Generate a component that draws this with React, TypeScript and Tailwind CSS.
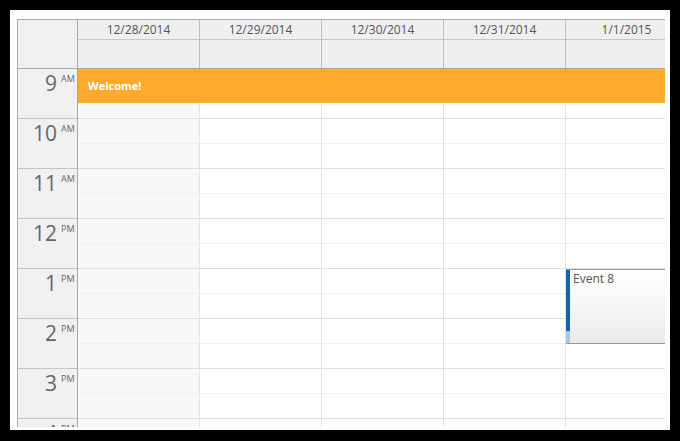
import React from "react";

const days = ["12/28/2014", "12/29/2014", "12/30/2014", "12/31/2014", "1/1/2015"];
const hours = [
  { h: "9", p: "AM" },
  { h: "10", p: "AM" },
  { h: "11", p: "AM" },
  { h: "12", p: "PM" },
  { h: "1", p: "PM" },
  { h: "2", p: "PM" },
  { h: "3", p: "PM" },
  { h: "4", p: "PM" },
];

function DayColumn({ weekend }: { weekend: boolean }) {
  return (
    <div
      className={`w-[122px] shrink-0 border-r border-[#e2e2e2] ${weekend ? "bg-[#f8f8f8]" : "bg-white"}`}
    >
      {hours.map((x) => (
        <div key={x.h}>
          <div className="h-[25px] border-b border-[#efefef]" />
          <div className="h-[25px] border-b border-[#dedede]" />
        </div>
      ))}
    </div>
  );
}

export default function App() {
  return (
    <div className="w-[680px] h-[441px] bg-black pt-[10px] pl-[10px] font-['Open_Sans',sans-serif]">
      <div className="w-[660px] h-[420px] bg-white pt-[9px] pl-[7px]">
        <div className="w-[648px] h-[408px] overflow-hidden">
          {/* header */}
          <div className="flex h-[49px] border-t border-[#a9a9a9]">
            <div className="w-[61px] shrink-0 bg-[#f0f0f0] border-l border-r border-[#a9a9a9]" />
            {days.map((d) => (
              <div
                key={d}
                className="w-[122px] shrink-0 flex flex-col bg-[#efefef] border-r border-[#bdbdbd]"
              >
                <div className="h-[20px] border-b border-[#c8c8c8] flex items-center justify-center text-[12px] text-[#555]">
                  {d}
                </div>
                <div className="flex-1" />
              </div>
            ))}
          </div>

          {/* body */}
          <div className="relative flex border-t border-[#a9a9a9]">
            <div className="w-[61px] shrink-0 bg-[#f0f0f0] border-l border-r border-[#a9a9a9]">
              {hours.map((x) => (
                <div
                  key={x.h}
                  className="h-[50px] border-b border-[#c4c4c4] flex justify-end pr-[2px] text-[#666]"
                >
                  <span className="text-[21px] leading-[26px] mt-[1px]">{x.h}</span>
                  <span className="text-[9px] leading-[10px] mt-[5px] ml-[4px] w-[14px]">{x.p}</span>
                </div>
              ))}
            </div>
            {days.map((d, i) => (
              <DayColumn key={d} weekend={i === 0} />
            ))}

            {/* events */}
            <div className="absolute left-[61px] top-0 w-[600px] h-[34px] bg-[#ffaa2d] flex items-center pl-[10px] text-[11px] font-bold text-white">
              Welcome!
            </div>
            <div className="absolute left-[549px] top-[200px] w-[110px] h-[75px] border-t border-b border-[#9a9a9a] bg-gradient-to-b from-white to-[#ebebeb] flex">
              <div className="w-[4px] flex flex-col">
                <div className="flex-1 bg-[#1066a8]" />
                <div className="h-[12px] bg-[#a9c8e8]" />
              </div>
              <div className="pl-[3px] pt-[1px] text-[12px] text-[#555] leading-[16px]">Event 8</div>
            </div>
          </div>
        </div>
      </div>
    </div>
  );
}
